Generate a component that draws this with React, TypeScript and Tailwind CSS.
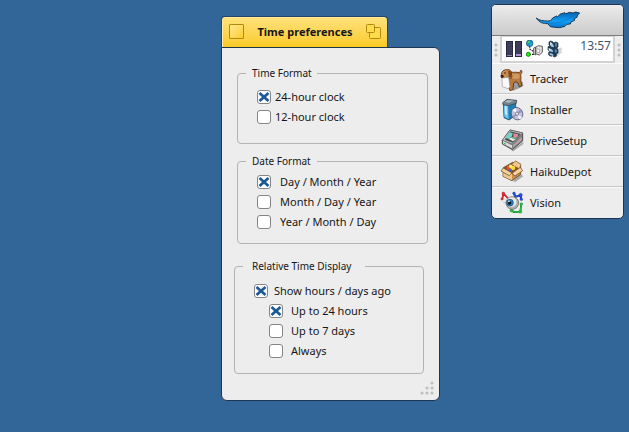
import React from 'react';

interface CheckRowProps {
  label: string;
  checked?: boolean;
  className?: string;
  gap?: string;
}

interface GroupProps {
  title: string;
  className: string;
  legendClass: string;
  children: React.ReactNode;
}

function CheckRow({ label, checked = false, className = '', gap = 'gap-1' }: CheckRowProps) {
  return (
    <label className={`flex h-5 items-center ${gap} ${className}`}>
      <span className="relative flex size-[14px] shrink-0">
        <input
          type="checkbox"
          defaultChecked={checked}
          className="peer size-[14px] appearance-none rounded-[3px] border border-[#858585] bg-white"
        />
        <svg
          viewBox="0 0 14 14"
          className="pointer-events-none absolute inset-0 hidden size-[14px] peer-checked:block"
          fill="none"
          stroke="#1c5a96"
          strokeWidth="2.8"
        >
          <path d="M2.5 3 11.5 11M11.5 3 2.5 11" />
        </svg>
      </span>
      <span className="whitespace-nowrap">{label}</span>
    </label>
  );
}

function Group({ title, className, legendClass, children }: GroupProps) {
  return (
    <fieldset className={`rounded-[4px] border border-[#b4b4b4] ${className}`}>
      <legend className={`text-[10px] leading-4 whitespace-nowrap ${legendClass}`}>{title}</legend>
      {children}
    </fieldset>
  );
}

function ZoomIcon() {
  return (
    <svg viewBox="0 0 16 16" className="size-4" fill="#fddb4a" stroke="#b08a10">
      <rect x="3.5" y="3.5" width="11" height="11" rx="1" />
      <rect x="0.5" y="0.5" width="8" height="8" rx="1" />
    </svg>
  );
}

function ResizeGrip() {
  return (
    <svg viewBox="0 0 14 14" className="size-[14px]" fill="#bdbdbd">
      <circle cx="12" cy="2" r="1.5" />
      <circle cx="7" cy="7" r="1.5" />
      <circle cx="12" cy="7" r="1.5" />
      <circle cx="2" cy="12" r="1.5" />
      <circle cx="7" cy="12" r="1.5" />
      <circle cx="12" cy="12" r="1.5" />
    </svg>
  );
}

function Feather() {
  return (
    <svg viewBox="147 33 144 54" className="h-[18px] w-12">
      <defs>
        <linearGradient id="feather" x1="0" y1="0" x2="0" y2="1">
          <stop offset="0" stopColor="#0560b4" />
          <stop offset="0.6" stopColor="#14a0f4" />
          <stop offset="1" stopColor="#0871c8" />
        </linearGradient>
      </defs>
      <path
        d="M154 54c8 7 20 9 34 9l9-1 6-8 11-6 4 2 8-8 14-4 3 3 11-4 10 2 8-3 12 3-6 6-2 7-8 4 1 5-11 5-2 6-10 1-6 6-16 4-16-1-12-2-8-9c-14 0-26-3-34-17z"
        fill="url(#feather)"
        stroke="#0b2942"
        strokeWidth="2.5"
        strokeLinejoin="round"
      />
      <path d="M186 69c30 3 62-6 88-28" fill="none" stroke="#0c66b2" strokeWidth="1.5" />
    </svg>
  );
}

function DragDots() {
  return (
    <svg viewBox="0 0 4 14" className="h-[14px] w-1" fill="#bcbcbc">
      <circle cx="2" cy="2" r="1.5" />
      <circle cx="2" cy="7" r="1.5" />
      <circle cx="2" cy="12" r="1.5" />
    </svg>
  );
}

function CpuIcon() {
  return (
    <svg viewBox="0 0 16 16" className="size-4">
      <path d="M0 0h7v16H0zM9 0h7v16H9z" fill="#292a40" />
      <path d="M1 1h5v14H1zM10 1h5v14h-5z" fill="#3e3e5a" />
      <path d="M1 14h5v1H1z" fill="#8383ad" />
      <path d="M10 13h5v2h-5z" fill="#b593d0" />
    </svg>
  );
}

function NetworkIcon() {
  return (
    <svg viewBox="90 18 51 54" className="h-[18px] w-[17px]">
      <path d="M101 36v9l11 7M100 62l12-1 4-8" fill="none" stroke="#222" strokeWidth="3.5" strokeDasharray="5 3" />
      <path d="m113 42 6-3v24l-6-4z" fill="#dcdcdc" stroke="#444" strokeWidth="2.5" />
      <path d="m119 40 8-5 12 2v18l-9 8-11-4z" fill="#e3e3e3" stroke="#4c4c4c" strokeWidth="2.8" />
      <path d="m122 44 9 2v10l-9-2z" fill="#fafafa" stroke="#8a8a8a" strokeWidth="2" />
      <circle cx="101" cy="28" r="9.8" fill="#1696d8" stroke="#154a66" strokeWidth="2" />
      <path d="M95 23c4-5 8-3 7 0l-3 4-5 1zM104 29l4-1-2 5-3 1z" fill="#45d06a" />
      <circle cx="97" cy="61" r="6.2" fill="#19ee1c" stroke="#16720e" strokeWidth="2.4" />
    </svg>
  );
}

function ProcessIcon() {
  return (
    <svg viewBox="150 18 48 54" className="h-[18px] w-4">
      <path d="m178 48 12-8 6 6-4 5 4 4-14 11-8-2z" fill="#d6d6d6" />
      <path
        d="m161 21 6 2 4 4 5-3 7 3v12l-4 3 4 4v11l-5 2v8l-7 2-4-4-5 2-7-4v-8l3-2-5-5v-10l6-1-3-5v-8z"
        fill="#1e3b55"
        stroke="#162a3b"
        strokeWidth="2"
        strokeLinejoin="round"
      />
      <path d="m159 25 6 2 4 5 2 8-8-2-4-5zM155 43l6 1 5 3 3 7-7-1-7-3zM158 57l8 2 4 4-2 3-10-4z" fill="#a4c9df" />
      <path d="m159 25 4 1 1 6-4-2zM155 43l4 1 1 5-4-1z" fill="#f0f8fc" />
      <path d="m174 27 7 2-1 8-5 2zM173 45l7 2v8l-6 1z" fill="#5485a8" />
    </svg>
  );
}

function TrackerIcon() {
  return (
    <svg viewBox="12 99 72 72" className="size-6">
      <path d="m46 152 16-14 18 6 2 12-16 8-16 6z" fill="#999" />
      <path
        d="M43 113c8 4 17 0 27 3 4-2 2-8 6-7 4 4 1 9-2 13 2 9 0 14 1 20l2 14-7 3-4-12-6-4-7 4-2 20-9 3-3-6 2-13-7-5-2-14z"
        fill="#b8793f"
        stroke="#452711"
        strokeWidth="2.2"
        strokeLinejoin="round"
      />
      <path d="M47 118c9 4 16-1 24 4v9c-8 5-16 5-24 1z" fill="#d3985b" />
      <path
        d="M17 116c3-7 11-10 18-9 8-1 11 5 11 10l2 12c-3 6-9 5-11 0l-5 5-11 1-6-6z"
        fill="#c98c4e"
        stroke="#452711"
        strokeWidth="2.2"
        strokeLinejoin="round"
      />
      <path d="M36 110c8-1 10 6 9 11l1 7c-3 4-7 2-8-3z" fill="#804819" />
      <path d="m18 132 20-2 4 28-6 6-17-6z" fill="#fafafa" stroke="#8e8e8e" strokeWidth="1.8" />
      <path d="m14 124 7-2 3 7-6 3-3-2z" fill="#372118" />
      <circle cx="27" cy="117" r="2.2" fill="#241208" />
    </svg>
  );
}

function InstallerIcon() {
  return (
    <svg viewBox="12 192 72 72" className="size-6">
      <path d="m22 208 13 3 24-5v38l-20 14-15-7z" fill="#227eb8" stroke="#173f59" strokeWidth="2.2" />
      <path d="m23 208 13 3 2 44-13-6z" fill="#6cc3f2" />
      <path d="m20 206 13-10 29 3-1 9-24 7-16-3z" fill="#71858f" stroke="#35444e" strokeWidth="2.2" />
      <path d="m26 204 9-6 19 2-16 6z" fill="#aebbc3" />
      <path d="m27 216 5 1 1 27-5-3z" fill="#d8f3ff" />
      <ellipse cx="63" cy="239" rx="17" ry="19" fill="#c3c3de" stroke="#51516a" strokeWidth="2.2" transform="rotate(-28 63 239)" />
      <path d="m63 239-14-11 10-6zM63 239l16 12-9 5z" fill="#f4f4ff" />
      <path d="m63 239 9-14 6 10zM63 239l-13 6 4 7z" fill="#9a94c4" />
      <circle cx="63" cy="239" r="5" fill="#eee" stroke="#625b82" strokeWidth="2.2" />
    </svg>
  );
}

function DriveIcon() {
  return (
    <svg viewBox="12 285 72 72" className="size-6">
      <path d="m46 350 36-26v6l-30 22z" fill="#a6a6a6" />
      <path d="m19 319 23-31 38 9v24l-31 26-30-17z" fill="#858585" stroke="#303030" strokeWidth="2.3" strokeLinejoin="round" />
      <path d="m19 319 23-31 38 9-31 33z" fill="#cdcdcd" stroke="#505050" strokeWidth="1.8" />
      <path d="m26 317 17-25 32 8-25 26z" fill="#485052" />
      <path d="m29 312 12-17 9 3-3 10-10 6z" fill="#71d7ce" />
      <path d="m52 298 15 3-3 9-11 3z" fill="#e98799" />
      <path d="m37 314 12-4 11 4-9 8z" fill="#f6e5df" />
      <path d="m50 309 12 2-4 5-9-2z" fill="#5eb78f" />
      <path d="m21 321 27 13v9l-27-14z" fill="#dadada" />
      <path d="m51 334 26-24v9l-26 21z" fill="#b9a4ac" />
      <path d="m23 327 7 4" stroke="#39b846" strokeWidth="3" />
    </svg>
  );
}

function DepotIcon() {
  return (
    <svg viewBox="12 378 72 72" className="size-6">
      <path d="m51 440 23-20 8 7-25 18z" fill="#aaa" />
      <path d="m22 401 28-16 24 12v24l-26 19-27-13z" fill="#c8914f" stroke="#4c3216" strokeWidth="2.2" strokeLinejoin="round" />
      <path d="m22 406 26 13v20l-26-12z" fill="#efc68b" />
      <path d="m22 402 25-14 26 11-24 18z" fill="#7d4f24" />
      <path d="m46 391 13-10 16 10-4 14-14-7z" fill="#efc68f" stroke="#66451f" strokeWidth="2" />
      <circle cx="38" cy="401" r="6.5" fill="#ef5136" />
      <circle cx="51" cy="402" r="7" fill="#ffd32f" />
      <circle cx="43" cy="409" r="5" fill="#3f67d8" />
      <circle cx="44" cy="397" r="5.5" fill="#ffeb67" />
      <path d="m22 402-7 9 25 14 8-8zM48 418l25-18 7 10-23 16z" fill="#f7d29d" stroke="#604018" strokeWidth="2" strokeLinejoin="round" />
    </svg>
  );
}

function VisionIcon() {
  return (
    <svg viewBox="12 471 72 72" className="size-6">
      <g fill="none" strokeLinejoin="round" strokeLinecap="round">
        <path d="m19 495 3-17 13 14" stroke="#8b1821" strokeWidth="5" />
        <path d="m19 495 3-17 13 14" stroke="#f0323e" strokeWidth="3.5" />
        <path d="m54 479 4 9 16-4 1 11" stroke="#132a80" strokeWidth="6" />
        <path d="m54 479 4 9 16-4 1 11" stroke="#2452ee" strokeWidth="4" />
        <path d="m46 528 7 6 20-1 3-23" stroke="#146524" strokeWidth="5.5" />
        <path d="m46 528 7 6 20-1 3-23" stroke="#28cc4a" strokeWidth="3.5" />
      </g>
      <g fill="#f0323e" stroke="#8b1821">
        <circle cx="22" cy="478" r="4" />
        <circle cx="18" cy="495" r="3.5" />
      </g>
      <g fill="#2452ee" stroke="#132a80">
        <circle cx="54" cy="478" r="4" />
        <circle cx="74" cy="483" r="5" />
        <circle cx="76" cy="496" r="4" />
      </g>
      <g fill="#28cc4a" stroke="#146524">
        <circle cx="46" cy="530" r="4" />
        <circle cx="73" cy="533" r="4.5" />
        <circle cx="76" cy="510" r="4" />
      </g>
      <path d="m22 504 10 4" stroke="#d0d0d0" strokeWidth="5" />
      <circle cx="49" cy="507" r="19" fill="#b2b2b2" stroke="#606060" strokeWidth="2.2" />
      <circle cx="47" cy="504" r="14.5" fill="#e6e6e6" />
      <circle cx="42" cy="506" r="10" fill="#2b87c8" stroke="#16496f" strokeWidth="2" />
      <circle cx="41" cy="507" r="5.2" fill="#081320" />
      <circle cx="39" cy="502" r="2.5" fill="#fff" />
    </svg>
  );
}

const APPS = [
  { name: 'Tracker', Icon: TrackerIcon },
  { name: 'Installer', Icon: InstallerIcon },
  { name: 'DriveSetup', Icon: DriveIcon },
  { name: 'HaikuDepot', Icon: DepotIcon },
  { name: 'Vision', Icon: VisionIcon },
];

function PreferencesWindow() {
  return (
    <section className="absolute top-4 left-[221px] w-[219px]">
      <header className="flex h-8 w-[167px] items-center rounded-t-[4px] border border-b-0 border-[#27466a] bg-linear-to-b from-[#ffe27a] to-[#fbc916] pr-[5px] pb-[2px] pl-[7px] shadow-[inset_1px_1px_0_#ffeaa0]">
        <button
          aria-label="Close"
          className="size-[15px] rounded-[1px] border border-[#b08a10] bg-linear-to-br from-[#ffe98c] to-[#fccb1c]"
        />
        <h1 className="flex-1 text-center text-[11px] leading-4 font-bold whitespace-nowrap">Time preferences</h1>
        <button aria-label="Zoom">
          <ZoomIcon />
        </button>
      </header>
      <div className="-mt-px rounded-[6px] rounded-tl-none border border-[#1d3550] bg-[#ededed] pt-[17px] pr-[11px] pb-[5px] pl-3">
        <Group title="Time Format" className="ml-[3px] pb-4" legendClass="ml-2 pr-[5px] pl-[6px]">
          <div className="pt-[6px] pl-[19px]">
            <CheckRow label="24-hour clock" checked />
            <CheckRow label="12-hour clock" />
          </div>
        </Group>
        <Group title="Date Format" className="mt-[9px] ml-[3px] pb-[11px]" legendClass="ml-2 pr-[6px] pl-[6px]">
          <div className="pt-[3px] pl-[19px]">
            <CheckRow label="Day / Month / Year" gap="gap-[9px]" checked />
            <CheckRow label="Month / Day / Year" gap="gap-[9px]" />
            <CheckRow label="Year / Month / Day" gap="gap-[9px]" />
          </div>
        </Group>
        <Group title="Relative Time Display" className="mt-[14px] mr-1 pb-3" legendClass="ml-2 pr-[14px] pl-[9px]">
          <div className="pt-[7px] pl-[19px]">
            <CheckRow label="Show hours / days ago" gap="gap-[6px]" checked />
            <CheckRow label="Up to 24 hours" gap="gap-2" className="ml-[15px]" checked />
            <CheckRow label="Up to 7 days" gap="gap-2" className="ml-[15px]" />
            <CheckRow label="Always" gap="gap-2" className="ml-[15px]" />
          </div>
        </Group>
        <div className="mt-[7px] -mr-[6px] flex justify-end">
          <ResizeGrip />
        </div>
      </div>
    </section>
  );
}

function Deskbar() {
  return (
    <aside className="absolute top-1 right-[5px] w-[133px] overflow-hidden rounded-[5px] border border-[#1d3550] bg-[#ededed]">
      <button
        aria-label="Menu"
        className="flex h-[31px] w-full items-center justify-center border-b border-[#7d7d7d] bg-linear-to-b from-[#ececec] to-[#cbcbcb]"
      >
        <Feather />
      </button>
      <div className="flex h-[27px] items-center gap-[2px] px-[2px]">
        <DragDots />
        <div className="flex h-[27px] flex-1 items-center gap-1 border-2 border-t border-[#d2d2d2] bg-white pr-[2px] pl-1">
          <CpuIcon />
          <NetworkIcon />
          <ProcessIcon />
          <time className="ml-auto self-start pt-px text-[12px] leading-4 text-[#465468]">13:57</time>
        </div>
        <DragDots />
      </div>
      <ul className="divide-y divide-[#c6c6c6] pb-px">
        {APPS.map(({ name, Icon }) => (
          <li key={name}>
            <button className="flex h-[30px] w-full items-center gap-[6px] border-t border-[#fafafa] pl-2 text-left">
              <Icon />
              <span>{name}</span>
            </button>
          </li>
        ))}
      </ul>
    </aside>
  );
}

export default function App() {
  return (
    <main className="relative min-h-screen overflow-hidden bg-[#336698] font-['Noto_Sans',sans-serif] text-[11px] leading-4 text-[#161616]">
      <PreferencesWindow />
      <Deskbar />
    </main>
  );
}
